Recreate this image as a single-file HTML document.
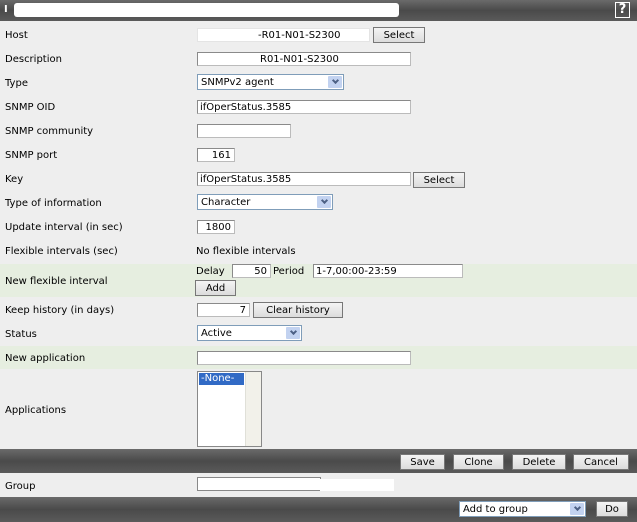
<!DOCTYPE html>
<html><head><meta charset="utf-8"><style>
*{margin:0;padding:0;box-sizing:border-box}
body{width:637px;height:522px;background:#eeeeee;font-family:"DejaVu Sans","Liberation Sans",sans-serif;font-size:10px;color:#000;position:relative;overflow:hidden}
.a{position:absolute;white-space:nowrap}
.bar{position:absolute;left:0;width:637px;background:linear-gradient(#6a6a6a,#4a4a4a 50%,#5a5a5a)}
.in{position:absolute;height:14px;background:#fff;border:1px solid #8a8a8a;border-right-color:#bbb;border-bottom-color:#bbb;font-family:"DejaVu Sans","Liberation Sans",sans-serif;font-size:10px;line-height:13px;padding-left:2px;white-space:nowrap}
.r{text-align:right;padding-right:3px}
.btn{position:absolute;height:16px;background:linear-gradient(#f4f4f4,#dcdcdc);border:1px solid #777;font-size:10px;line-height:15px;text-align:center}
.sel{position:absolute;height:16px;background:#fff;border:1px solid #7f9db9;font-size:10px;line-height:15px;padding-left:3px}
.sel:after{content:"";position:absolute;right:1px;top:1px;width:14px;height:12px;background:#c2d2f0;border-radius:1px}
.sel i{position:absolute;right:5px;top:3px;width:5px;height:5px;border-right:2px solid #4d6185;border-bottom:2px solid #4d6185;transform:rotate(45deg);z-index:2}
.green{position:absolute;left:0;width:637px;background:#e6eee0}
</style></head><body>
<div class="bar" style="top:0;height:21px"></div>
<div class="a" style="left:4px;top:4px;color:#fff;font-weight:bold">I</div>
<div class="a" style="left:14px;top:3px;width:385px;height:14px;background:#fff;border-radius:3px"></div>
<div class="a" style="left:615px;top:2px;width:15px;height:16px;border:1px solid #fff;color:#fff;font-weight:bold;font-size:13px;line-height:14px;text-align:center">?</div>

<div class="green" style="top:264px;height:33px"></div>
<div class="green" style="top:346px;height:23px"></div>

<div class="a" style="left:5px;top:30px">Host</div>
<div class="in" style="left:197px;top:28px;width:173px;border-color:#e4e4e4;background:#fff">
<span style="position:absolute;left:60px">-R01-N01-S2300</span></div>
<div class="btn" style="left:373px;top:27px;width:52px;height:16px">Select</div>

<div class="a" style="left:5px;top:54px">Description</div>
<div class="in" style="left:197px;top:52px;width:214px"><span style="position:absolute;left:62px">R01-N01-S2300</span></div>

<div class="a" style="left:5px;top:78px">Type</div>
<div class="sel" style="left:197px;top:74px;width:147px">SNMPv2 agent<i></i></div>

<div class="a" style="left:5px;top:102px">SNMP OID</div>
<div class="in" style="left:197px;top:100px;width:214px">ifOperStatus.3585</div>

<div class="a" style="left:5px;top:126px">SNMP community</div>
<div class="in" style="left:197px;top:124px;width:94px"></div>

<div class="a" style="left:5px;top:150px">SNMP port</div>
<div class="in r" style="left:197px;top:148px;width:38px">161</div>

<div class="a" style="left:5px;top:174px">Key</div>
<div class="in" style="left:197px;top:172px;width:214px">ifOperStatus.3585</div>
<div class="btn" style="left:413px;top:172px;width:52px">Select</div>

<div class="a" style="left:5px;top:198px">Type of information</div>
<div class="sel" style="left:197px;top:194px;width:136px">Character<i></i></div>

<div class="a" style="left:5px;top:222px">Update interval (in sec)</div>
<div class="in r" style="left:197px;top:220px;width:38px">1800</div>

<div class="a" style="left:5px;top:246px">Flexible intervals (sec)</div>
<div class="a" style="left:196px;top:246px">No flexible intervals</div>

<div class="a" style="left:5px;top:276px">New flexible interval</div>
<div class="a" style="left:196px;top:266px">Delay</div>
<div class="in r" style="left:232px;top:264px;width:39px">50</div>
<div class="a" style="left:273px;top:266px">Period</div>
<div class="in" style="left:313px;top:264px;width:150px">1-7,00:00-23:59</div>
<div class="btn" style="left:195px;top:280px;width:41px">Add</div>

<div class="a" style="left:5px;top:305px">Keep history (in days)</div>
<div class="in r" style="left:197px;top:303px;width:53px">7</div>
<div class="btn" style="left:253px;top:302px;width:90px">Clear history</div>

<div class="a" style="left:5px;top:329px">Status</div>
<div class="sel" style="left:197px;top:325px;width:105px">Active<i></i></div>

<div class="a" style="left:5px;top:353px">New application</div>
<div class="in" style="left:197px;top:351px;width:214px"></div>

<div class="a" style="left:5px;top:405px">Applications</div>
<div class="a" style="left:197px;top:371px;width:65px;height:76px;background:#fff;border:1px solid #888">
<div style="position:absolute;left:1px;top:1px;width:45px;height:12px;background:#316ac5;color:#fff;line-height:12px;padding-left:2px">-None-</div>
<div style="position:absolute;right:0;top:0;width:16px;height:74px;background:#f2f1ea;border-left:1px solid #e0e0d8"></div>
</div>

<div class="bar" style="top:449px;height:24px"></div>
<div class="btn" style="left:400px;top:454px;width:45px">Save</div>
<div class="btn" style="left:453px;top:454px;width:51px">Clone</div>
<div class="btn" style="left:512px;top:454px;width:54px">Delete</div>
<div class="btn" style="left:573px;top:454px;width:56px">Cancel</div>

<div class="a" style="left:5px;top:481px">Group</div>
<div class="in" style="left:197px;top:477px;width:124px;border-color:#888"></div>
<div class="a" style="left:320px;top:479px;width:74px;height:12px;background:#fff"></div>

<div class="bar" style="top:497px;height:25px"></div>
<div class="sel" style="left:459px;top:501px;width:127px">Add to group<i></i></div>
<div class="btn" style="left:596px;top:501px;width:32px">Do</div>
</body></html>
